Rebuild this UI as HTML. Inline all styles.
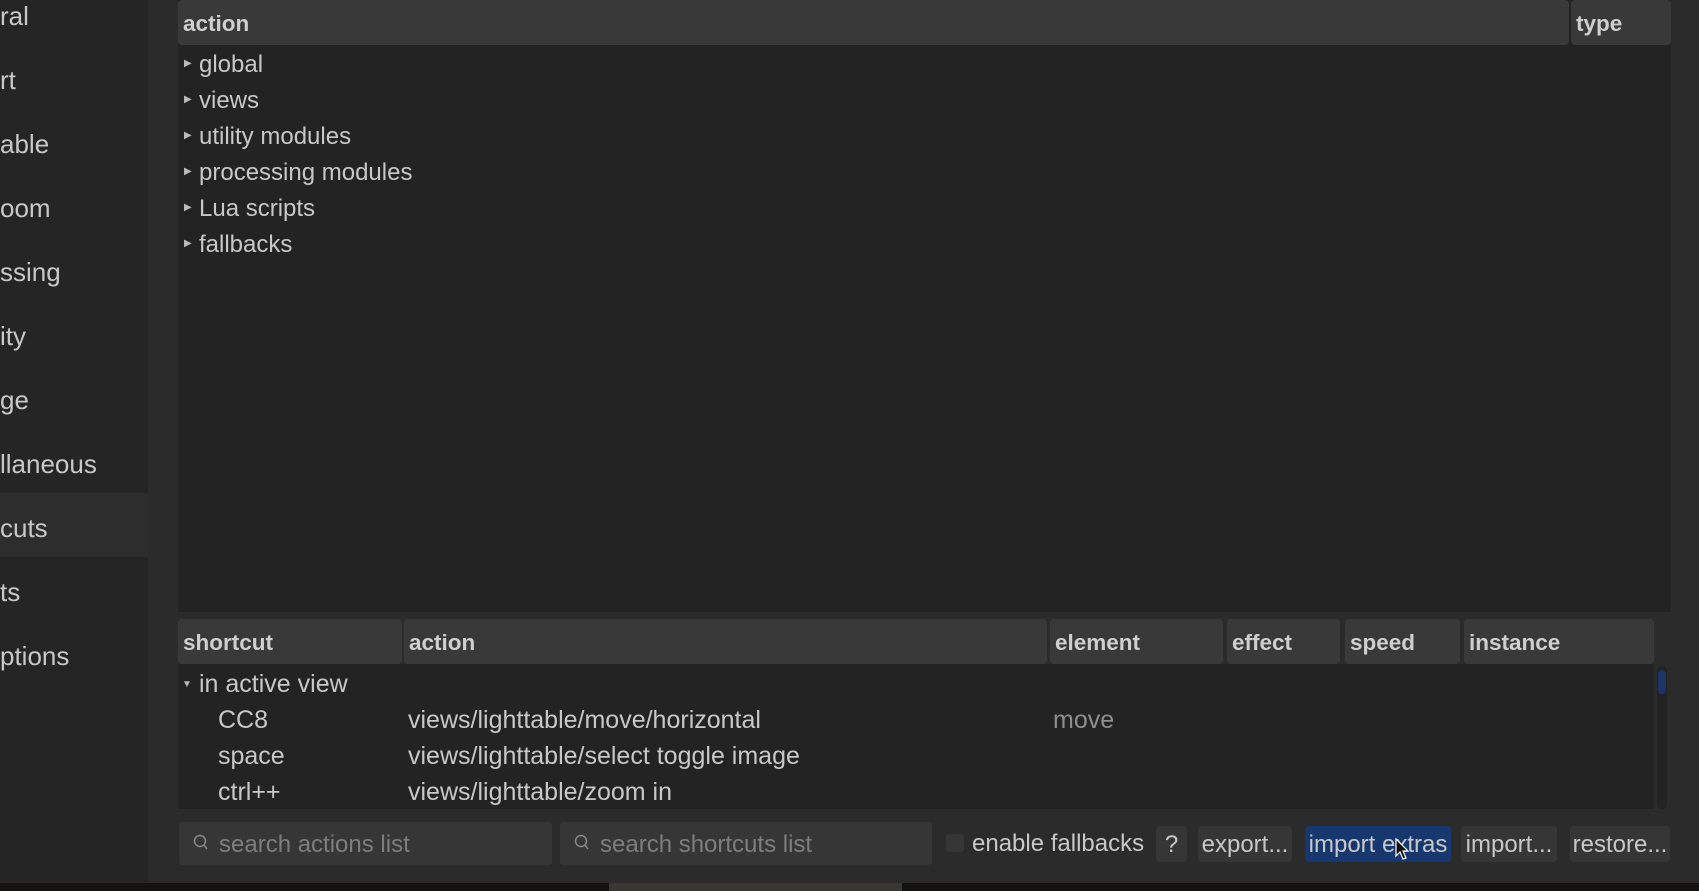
<!DOCTYPE html>
<html><head><meta charset="utf-8"><style>
*{margin:0;padding:0;box-sizing:border-box}
body{width:1699px;height:891px;overflow:hidden;background:#2b2b2b;font-family:"Liberation Sans","DejaVu Sans",sans-serif;color:#c8c8c8;position:relative;font-size:24px}
.a{position:absolute;white-space:nowrap}
.side{left:0;top:0;width:148px;height:883px;background:#252525}
.sel{left:0;top:493px;width:148px;height:64px;background:#2d2d2d}
.si{left:0;font-size:26px;color:#c8c8c8}
.hdr{background:#393939;border-radius:4px;font-weight:bold;color:#cfcfcf;padding-left:5px;line-height:47px;height:45px;font-size:22.5px}
.body{background:#232323}
.tri{font-size:10px;color:#bbb}
.r{font-size:25px}
.inp{background:#363636;border-radius:3px;color:#7e7e7e;font-size:24px;line-height:45px;padding-left:40px}
.btn{background:#363636;border-radius:4px;line-height:38px;height:36px;text-align:center;font-size:24px;color:#c8c8c8}
</style></head><body>
<div class="a side"></div>
<div class="a sel"></div>
<div class="a si" style="top:1px">ral</div>
<div class="a si" style="top:65px">rt</div>
<div class="a si" style="top:129px">able</div>
<div class="a si" style="top:193px">oom</div>
<div class="a si" style="top:257px">ssing</div>
<div class="a si" style="top:321px">ity</div>
<div class="a si" style="top:385px">ge</div>
<div class="a si" style="top:449px">llaneous</div>
<div class="a si" style="top:513px">cuts</div>
<div class="a si" style="top:577px">ts</div>
<div class="a si" style="top:641px">ptions</div>

<div class="a body" style="left:178px;top:0;width:1493px;height:612px"></div>
<div class="a hdr" style="left:178px;top:0;width:1391px">action</div>
<div class="a hdr" style="left:1571px;top:0;width:100px">type</div>
<div class="a tri" style="left:184px;top:58px">▶</div><div class="a" style="left:199px;top:51px">global</div>
<div class="a tri" style="left:184px;top:94px">▶</div><div class="a" style="left:199px;top:87px">views</div>
<div class="a tri" style="left:184px;top:130px">▶</div><div class="a" style="left:199px;top:123px">utility modules</div>
<div class="a tri" style="left:184px;top:166px">▶</div><div class="a" style="left:199px;top:159px">processing modules</div>
<div class="a tri" style="left:184px;top:202px">▶</div><div class="a" style="left:199px;top:195px">Lua scripts</div>
<div class="a tri" style="left:184px;top:238px">▶</div><div class="a" style="left:199px;top:231px">fallbacks</div>

<div class="a body" style="left:178px;top:664px;width:1476px;height:145px"></div>
<div class="a hdr" style="left:178px;top:619px;width:224px">shortcut</div>
<div class="a hdr" style="left:404px;top:619px;width:643px">action</div>
<div class="a hdr" style="left:1050px;top:619px;width:173px">element</div>
<div class="a hdr" style="left:1227px;top:619px;width:113px">effect</div>
<div class="a hdr" style="left:1345px;top:619px;width:115px">speed</div>
<div class="a hdr" style="left:1464px;top:619px;width:190px">instance</div>
<div class="a" style="left:1657px;top:666px;width:10px;height:143px;background:#232323;border-radius:5px"></div>
<div class="a" style="left:1658px;top:670px;width:8px;height:24px;background:#1d3566;border-radius:4px"></div>
<div class="a tri" style="left:182px;top:679px">▼</div><div class="a r" style="left:199px;top:670px">in active view</div>
<div class="a r" style="left:218px;top:706px">CC8</div><div class="a r" style="left:408px;top:706px">views/lighttable/move/horizontal</div><div class="a r" style="left:1053px;top:706px;color:#8e8e8e">move</div>
<div class="a r" style="left:218px;top:742px">space</div><div class="a r" style="left:408px;top:742px">views/lighttable/select toggle image</div>
<div class="a r" style="left:218px;top:778px">ctrl++</div><div class="a r" style="left:408px;top:778px">views/lighttable/zoom in</div>

<div class="a inp" style="left:179px;top:822px;width:373px;height:43px">search actions list</div>
<div class="a inp" style="left:560px;top:822px;width:372px;height:43px">search shortcuts list</div>
<svg class="a" style="left:192px;top:833px" width="18" height="20"><circle cx="8" cy="8" r="5.5" fill="none" stroke="#888" stroke-width="1.5"/><line x1="12" y1="12" x2="15" y2="16" stroke="#888" stroke-width="1.5"/></svg>
<svg class="a" style="left:573px;top:833px" width="18" height="20"><circle cx="8" cy="8" r="5.5" fill="none" stroke="#888" stroke-width="1.5"/><line x1="12" y1="12" x2="15" y2="16" stroke="#888" stroke-width="1.5"/></svg>
<div class="a" style="left:946px;top:834px;width:18px;height:18px;background:#363636;border-radius:3px"></div>
<div class="a" style="left:972px;top:830px">enable fallbacks</div>
<div class="a btn" style="left:1156px;top:826px;width:31px">?</div>
<div class="a btn" style="left:1198px;top:826px;width:94px">export...</div>
<div class="a btn" style="left:1305px;top:826px;width:146px;background:#17386f">import extras</div>
<div class="a btn" style="left:1461px;top:826px;width:96px">import...</div>
<div class="a btn" style="left:1570px;top:826px;width:100px">restore...</div>
<svg class="a" style="left:1395px;top:838px" width="16" height="24"><path d="M1 1 L1 18 L5 14 L8 21 L11 20 L8 13 L13 13 Z" fill="#111" stroke="#fff" stroke-width="1.2"/></svg>

<div class="a" style="left:0;top:883px;width:1699px;height:8px;background:#151311"></div>
<div class="a" style="left:609px;top:883px;width:293px;height:8px;background:#3a3632"></div>
</body></html>
